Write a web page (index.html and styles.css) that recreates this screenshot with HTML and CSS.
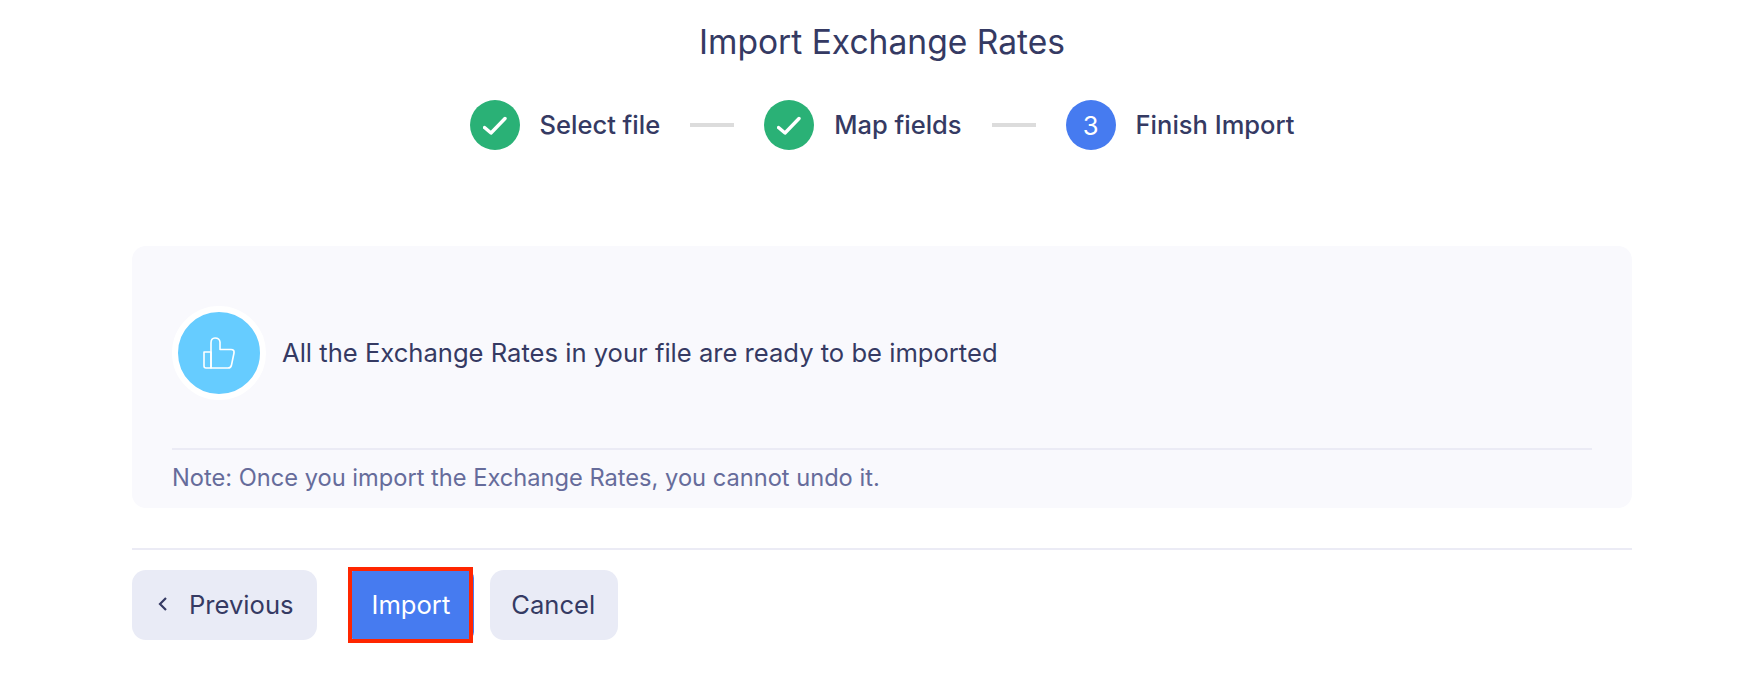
FILE: index.html
```html
<!DOCTYPE html>
<html lang="en">
<head>
<meta charset="utf-8">
<title>Import Exchange Rates</title>
<link rel="stylesheet" href="styles.css">
</head>
<body>
<main class="page">
  <h1 class="title">Import Exchange Rates</h1>
  <ol class="steps">
    <li class="step">
      <span class="badge badge-done"><svg class="check" viewBox="0 0 24 20" aria-hidden="true"><path d="M1.5 12.500 L8 18 L22 3.500" /></svg></span>
      <span class="step-label">Select file</span>
    </li>
    <li class="connector"></li>
    <li class="step">
      <span class="badge badge-done"><svg class="check" viewBox="0 0 24 20" aria-hidden="true"><path d="M1.5 12.500 L8 18 L22 3.500" /></svg></span>
      <span class="step-label">Map fields</span>
    </li>
    <li class="connector"></li>
    <li class="step">
      <span class="badge badge-current">3</span>
      <span class="step-label">Finish Import</span>
    </li>
  </ol>

  <section class="panel">
    <div class="ready">
      <span class="thumb">
        <svg class="thumb-icon" viewBox="0 0 32 32" aria-hidden="true">
          <path d="M1 15 H8 V31 H3 Q1 31 1 29 Z" />
          <path d="M8 31 V6 Q8 1 12 1 Q16.500 1 17 5 V12.500 H28 Q31.500 12.500 31 16 L28.500 28 Q28 31 25 31 Z" />
        </svg>
      </span>
      <p class="ready-text">All the Exchange Rates in your file are ready to be imported</p>
    </div>
    <p class="note">Note: Once you import the Exchange Rates, you cannot undo it.</p>
  </section>

  <footer class="actions">
    <button class="btn btn-muted btn-prev" type="button">
      <svg class="chev" viewBox="0 0 10 16" aria-hidden="true"><path d="M8 2 L2 8 L8 14" /></svg>
      Previous
    </button>
    <div class="import-wrap">
      <button class="btn btn-primary" type="button">Import</button>
      <span class="highlight"></span>
    </div>
    <button class="btn btn-muted btn-cancel" type="button">Cancel</button>
  </footer>
</main>
</body>
</html>
```

FILE: styles.css
```css
* { box-sizing: border-box; }

html, body {
  margin: 0;
  background: #ffffff;
}

body {
  font-family: Inter, "Liberation Sans", sans-serif;
  color: #353a63;
}

.page {
  width: 1500px;
  min-height: 694px;
  margin-left: 132px;
}

.title {
  margin: 0;
  padding-top: 21px;
  height: 100px;
  font-size: 33.6px;
  line-height: 42px;
  font-weight: 400;
  text-align: center;
}

.steps {
  list-style: none;
  margin: 0;
  padding: 0;
  display: flex;
  align-items: center;
  justify-content: center;
  height: 50px;
}

.step {
  display: flex;
  align-items: center;
  gap: 20px;
}

.step-label {
  font-size: 25.5px;
  font-weight: 500;
  line-height: 30px;
}

.connector {
  width: 44px;
  height: 4px;
  margin: 0 30px;
  background: #dcdcdc;
}

.badge {
  width: 50px;
  height: 50px;
  border-radius: 50%;
  display: flex;
  align-items: center;
  justify-content: center;
  color: #ffffff;
  font-size: 25.6px;
}

.badge-done { background: #2ab176; }
.badge-current { background: #467bf0; }

.check {
  width: 24px;
  height: 20px;
  fill: none;
  stroke: #ffffff;
  stroke-width: 3.4px;
  stroke-linecap: round;
  stroke-linejoin: round;
}

.panel {
  margin-top: 96px;
  height: 262px;
  padding: 60px 40px 0;
  background: #f9f9fd;
  border-radius: 14px;
}

.ready {
  display: flex;
  align-items: flex-start;
  gap: 16px;
  height: 144px;
  border-bottom: 2px solid #ebebf5;
}

.thumb {
  width: 94px;
  height: 94px;
  flex: none;
  border-radius: 50%;
  background: #66ccff;
  border: 6px solid #ffffff;
  display: flex;
  align-items: center;
  justify-content: center;
}

.thumb-icon {
  width: 32px;
  height: 32px;
  fill: none;
  stroke: #ffffff;
  stroke-width: 1.6px;
  stroke-linejoin: round;
}

.ready-text {
  margin: 0;
  font-size: 25.6px;
  line-height: 94px;
  font-weight: 400;
}

.note {
  margin: 0;
  padding-top: 13px;
  font-size: 23.65px;
  line-height: 30px;
  color: #666c9b;
}

.actions {
  margin-top: 40px;
  padding: 20px 0 12px;
  border-top: 2px solid #ebebf5;
  display: flex;
  gap: 16px;
}

.btn {
  height: 70px;
  border: 0;
  border-radius: 14px;
  padding: 0 22px 2px;
  font-family: inherit;
  font-size: 25.6px;
  font-weight: 400;
  display: flex;
  align-items: center;
}

.btn-muted {
  background: #e9ebf6;
  color: #353a63;
}

.btn-prev {
  gap: 21px;
  padding: 0 23px 2px 26px;
  margin-right: 19px;
}

.btn-cancel {
  padding: 0 23px 2px 21px;
}

.chev {
  width: 10px;
  height: 16px;
  fill: none;
  stroke: #353a63;
  stroke-width: 2.2px;
}

.import-wrap {
  position: relative;
  height: 70px;
}

.btn-primary {
  background: #467bf0;
  color: #ffffff;
  border-radius: 2px 8px 8px 2px;
  padding: 0 24px 2px 20px;
}

.highlight {
  position: absolute;
  z-index: 1;
  left: -4px;
  top: -3px;
  width: 125px;
  height: 76px;
  border: 4px solid #ff2600;
  pointer-events: none;
}
```
